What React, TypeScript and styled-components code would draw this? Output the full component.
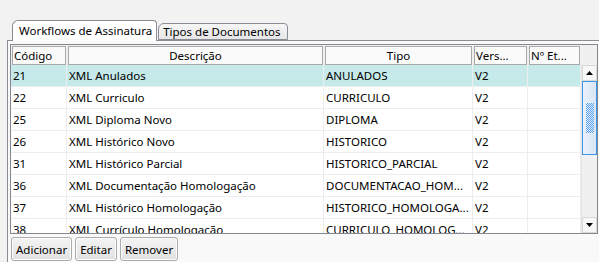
import React from 'react';
import styled, { createGlobalStyle } from 'styled-components';

const GlobalStyle = createGlobalStyle`
  html, body {
    margin: 0;
    padding: 0;
    background: #f2f2f2;
    overflow: hidden;
  }
  body {
    font-family: 'Noto Sans', 'Open Sans', sans-serif;
    font-size: 11.5px;
    color: #000;
  }
`;

const Window = styled.div`
  width: 599px;
  height: 262px;
  padding: 20px 0 0 7px;
  box-sizing: border-box;
  overflow: hidden;
`;

const TabStrip = styled.div`
  display: flex;
  align-items: flex-end;
  height: 20px;
  padding-left: 5px;
  position: relative;
  z-index: 1;
`;

const Tab = styled.div<{ $active?: boolean }>`
  box-sizing: border-box;
  height: ${(p) => (p.$active ? '21px' : '17px')};
  margin-bottom: ${(p) => (p.$active ? '-1px' : '0')};
  margin-left: ${(p) => (p.$active ? '0' : '1px')};
  padding: ${(p) => (p.$active ? '0 4px 0 6px' : '0 6px 0 4px')};
  border: 1px solid #898c95;
  border-bottom: ${(p) => (p.$active ? 'none' : '1px solid #898c95')};
  border-radius: 6px 4px 0 0;
  background: ${(p) => (p.$active ? '#fff' : 'linear-gradient(#f6f6f6, #e6e6e6)')};
  display: flex;
  align-items: center;
  line-height: 1;
  white-space: nowrap;
`;

const Pane = styled.div`
  border-top: 1px solid #898c95;
  border-left: 1px solid #898c95;
  background: #f9f9f9;
  padding: 3px 0 0 2px;
  height: 222px;
  box-sizing: border-box;
`;

const Grid = styled.div`
  width: 588px;
  height: 190px;
  box-sizing: border-box;
  border: 1px solid #828790;
  background: #fff;
  display: flex;
  flex-direction: column;
`;

const HeaderRow = styled.div`
  display: flex;
  height: 20px;
  flex: none;
  background: #f0f0f0;
`;

const HeaderCell = styled.div<{ $w: number }>`
  width: ${(p) => p.$w}px;
  box-sizing: border-box;
  padding: 1px 1px 0 1px;
  flex: none;
`;

const HeaderInner = styled.div<{ $align: string }>`
  height: 100%;
  box-sizing: border-box;
  border: 1px solid #a9a9a9;
  background: #fafafa;
  text-align: ${(p) => p.$align};
  padding: 0 1px;
  line-height: 17px;
  white-space: nowrap;
  overflow: hidden;
`;

const HeaderFiller = styled.div`
  flex: 1;
`;

const Body = styled.div`
  display: flex;
  flex: 1;
  min-height: 0;
`;

const Rows = styled.div`
  width: 570px;
  overflow: hidden;
`;

const Row = styled.div<{ $selected?: boolean }>`
  display: flex;
  height: 22px;
  background: ${(p) => (p.$selected ? '#c6e9e9' : '#fff')};
`;

const Cell = styled.div<{ $w: number }>`
  width: ${(p) => p.$w}px;
  flex: none;
  box-sizing: border-box;
  border-right: 1px solid #ededed;
  border-bottom: 1px solid #ededed;
  padding: 0 2px;
  line-height: 22px;
  white-space: nowrap;
  overflow: hidden;
`;

const ScrollBar = styled.div`
  width: 16px;
  display: flex;
  flex-direction: column;
  background: #f0f0f0;
  border-left: 1px solid #e4e4e4;
  box-sizing: border-box;
`;

const ArrowButton = styled.div`
  height: 16px;
  flex: none;
  display: flex;
  align-items: center;
  justify-content: center;
  background: #f7f7f7;
  border: 1px solid #d9d9d9;
  box-sizing: border-box;
`;

const Track = styled.div`
  flex: 1;
  display: flex;
  flex-direction: column;
`;

const Thumb = styled.div`
  height: 74px;
  box-sizing: border-box;
  border: 1px solid #3c95e6;
  background: linear-gradient(90deg, #e9f1fb, #d9e6f6);
  display: flex;
  align-items: center;
  justify-content: center;
`;

const Grip = styled.div`
  width: 8px;
  height: 30px;
  background: repeating-conic-gradient(#5aa2ea 0 25%, transparent 0 50%) 0 0 / 2px 2px;
`;

const ButtonBar = styled.div`
  display: flex;
  gap: 3px;
  padding: 3px 0 0 1px;
`;

const Button = styled.button`
  height: 24px;
  padding: 0 4px;
  border: 1px solid #acacac;
  border-radius: 3px;
  background: linear-gradient(#f4f4f4, #e1e1e1);
  font-family: inherit;
  font-size: 11.5px;
  color: #000;
  box-shadow: inset 0 0 0 1px #fcfcfc;
`;

const columns = [
  { title: 'Código', w: 56, align: 'left' },
  { title: 'Descrição', w: 257, align: 'center' },
  { title: 'Tipo', w: 149, align: 'center' },
  { title: 'Vers...', w: 55, align: 'left' },
  { title: 'Nº Et...', w: 53, align: 'left' },
];

const data = [
  ['21', 'XML Anulados', 'ANULADOS', 'V2', ''],
  ['22', 'XML Curriculo', 'CURRICULO', 'V2', ''],
  ['25', 'XML Diploma Novo', 'DIPLOMA', 'V2', ''],
  ['26', 'XML Histórico Novo', 'HISTORICO', 'V2', ''],
  ['31', 'XML Histórico Parcial', 'HISTORICO_PARCIAL', 'V2', ''],
  ['36', 'XML Documentação Homologação', 'DOCUMENTACAO_HOM...', 'V2', ''],
  ['37', 'XML Histórico Homologação', 'HISTORICO_HOMOLOGA...', 'V2', ''],
  ['38', 'XML Currículo Homologação', 'CURRICULO_HOMOLOG...', 'V2', ''],
];

function Arrow({ up }: { up?: boolean }) {
  return (
    <svg width="7" height="4" viewBox="0 0 7 4">
      <path d={up ? 'M0 4 L3.5 0 L7 4 Z' : 'M0 0 L7 0 L3.5 4 Z'} fill="#000" />
    </svg>
  );
}

export default function App(): JSX.Element {
  return (
    <>
      <GlobalStyle />
      <Window>
        <TabStrip>
          <Tab $active>Workflows de Assinatura</Tab>
          <Tab>Tipos de Documentos</Tab>
        </TabStrip>
        <Pane>
          <Grid>
            <HeaderRow>
              {columns.map((c) => (
                <HeaderCell key={c.title} $w={c.w}>
                  <HeaderInner $align={c.align}>{c.title}</HeaderInner>
                </HeaderCell>
              ))}
              <HeaderFiller />
            </HeaderRow>
            <Body>
              <Rows>
                {data.map((row, i) => (
                  <Row key={row[0]} $selected={i === 0}>
                    {row.map((v, j) => (
                      <Cell key={j} $w={columns[j].w}>
                        {v}
                      </Cell>
                    ))}
                  </Row>
                ))}
              </Rows>
              <ScrollBar>
                <ArrowButton>
                  <Arrow up />
                </ArrowButton>
                <Track>
                  <Thumb>
                    <Grip />
                  </Thumb>
                </Track>
                <ArrowButton>
                  <Arrow />
                </ArrowButton>
              </ScrollBar>
            </Body>
          </Grid>
          <ButtonBar>
            <Button>Adicionar</Button>
            <Button>Editar</Button>
            <Button>Remover</Button>
          </ButtonBar>
        </Pane>
      </Window>
    </>
  );
}
